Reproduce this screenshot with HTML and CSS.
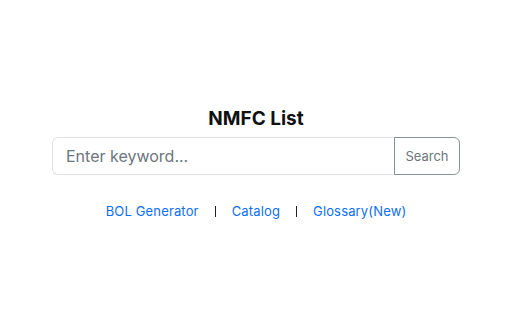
FILE: index.html
```html
<!DOCTYPE html>
<html>
<head>
<meta charset="utf-8">
<link rel="stylesheet" href="styles.css">
</head>
<body>
<main class="page">
  <h1 class="title">NMFC List</h1>
  <form class="search">
    <input class="search-input" type="text" placeholder="Enter keyword...">
    <button class="search-btn" type="button">Search</button>
  </form>
  <nav class="links">
    <a href="#" class="link">BOL Generator</a>
    <span class="sep"></span>
    <a href="#" class="link">Catalog</a>
    <span class="sep"></span>
    <a href="#" class="link">Glossary(New)</a>
  </nav>
</main>
</body>
</html>
```
FILE: styles.css
```css
html, body {
  margin: 0;
  padding: 0;
  background: #fff;
}
body {
  font-family: "Inter", "Open Sans", sans-serif;
  color: #212529;
}
.page {
  width: 408px;
  margin: 0 auto;
  padding-top: 106px;
  display: flex;
  flex-direction: column;
  align-items: center;
}
.title {
  margin: 0 0 5px;
  font-size: 19px;
  font-weight: 700;
  line-height: 26px;
  color: #111;
}
.search {
  display: flex;
  width: 100%;
  margin: 0;
}
.search-input {
  flex: 1;
  min-width: 0;
  height: 38px;
  box-sizing: border-box;
  border: 1px solid #dee2e6;
  border-right: none;
  border-radius: 6px 0 0 6px;
  padding: 0 13px;
  font-family: inherit;
  font-size: 16px;
  color: #212529;
  outline: none;
}
.search-input::placeholder {
  color: #6c757d;
}
.search-btn {
  width: 66px;
  height: 38px;
  box-sizing: border-box;
  border: 1px solid #8a8f94;
  border-radius: 0 6px 6px 0;
  background: #fff;
  color: #6c757d;
  font-family: inherit;
  font-size: 13px;
  padding: 0;
}
.links {
  display: flex;
  align-items: center;
  gap: 16px;
  margin-top: 28px;
  font-size: 13px;
  line-height: 16px;
  letter-spacing: 0.15px;
}
.link {
  color: #0d6efd;
  text-decoration: none;
}
.sep {
  width: 1px;
  height: 11px;
  background: #222;
}
```
